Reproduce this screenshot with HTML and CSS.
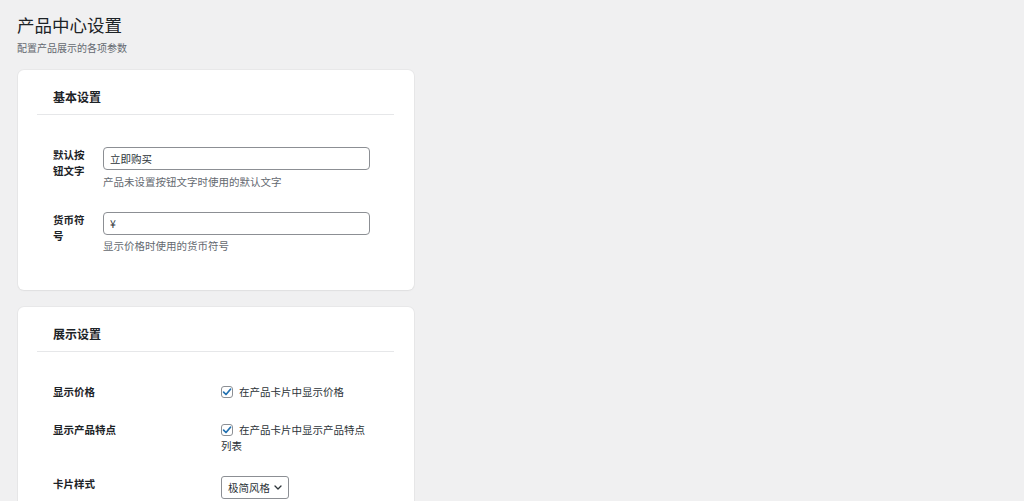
FILE: index.html
```html
<!DOCTYPE html>
<html lang="zh-CN">
<head>
<meta charset="utf-8">
<title>产品中心设置</title>
<link rel="stylesheet" href="styles.css">
</head>
<body>
<div class="page">
  <h1 class="page-title">产品中心设置</h1>
  <p class="page-sub">配置产品展示的各项参数</p>

  <section class="card">
    <div class="card-head"><h2 class="card-title">基本设置</h2></div>
    <div class="card-body grid-basic">
      <div class="label">默认按钮文字</div>
      <div class="field">
        <input class="text-input" type="text" value="立即购买">
        <p class="desc">产品未设置按钮文字时使用的默认文字</p>
      </div>
      <div class="label">货币符号</div>
      <div class="field">
        <input class="text-input" type="text" value="¥">
        <p class="desc">显示价格时使用的货币符号</p>
      </div>
    </div>
  </section>

  <section class="card">
    <div class="card-head"><h2 class="card-title">展示设置</h2></div>
    <div class="card-body grid-display">
      <div class="label">显示价格</div>
      <div class="field check-field">
        <span class="cb"><svg viewBox="0 0 12 12" width="12" height="12"><path d="M2.6 6.1 L5 8.5 L9.5 3.2" fill="none" stroke="#2271b1" stroke-width="1.7" stroke-linecap="round" stroke-linejoin="round"/></svg></span>在产品卡片中显示价格
      </div>
      <div class="label">显示产品特点</div>
      <div class="field check-field">
        <span class="cb"><svg viewBox="0 0 12 12" width="12" height="12"><path d="M2.6 6.1 L5 8.5 L9.5 3.2" fill="none" stroke="#2271b1" stroke-width="1.7" stroke-linecap="round" stroke-linejoin="round"/></svg></span>在产品卡片中显示产品特点列表
      </div>
      <div class="label">卡片样式</div>
      <div class="field">
        <div class="select"><span>极简风格</span><svg viewBox="0 0 8 5" width="8" height="5"><path d="M1 1 L4 4 L7 1" fill="none" stroke="#2c3338" stroke-width="1.3" stroke-linecap="round" stroke-linejoin="round"/></svg></div>
      </div>
    </div>
  </section>
</div>
</body>
</html>
```
FILE: styles.css
```css
html, body {
  margin: 0;
  padding: 0;
}
body {
  background: #f0f0f1;
  color: #1d2327;
  font-family: "Noto Sans CJK SC", "Noto Sans", sans-serif;
  font-size: 10.5px;
}
.page {
  padding: 13px 0 0 17px;
}
.page-title {
  margin: 0;
  font-size: 17.5px;
  line-height: 24px;
  font-weight: 400;
  color: #1d2327;
}
.page-sub {
  margin: 3px 0 0;
  font-size: 10px;
  line-height: 16px;
  color: #646970;
}
.card {
  width: 396px;
  box-sizing: border-box;
  margin: 14px 0 17px 1px;
  padding: 0 20px 0 19px;
  background: #fff;
  border-radius: 6px;
  box-shadow: 0 0 0 1px rgba(0,0,0,0.03), 0 1px 2px rgba(0,0,0,0.04);
}
.card + .card {
  margin-top: 0;
}
.card-head {
  padding: 19px 16px 9px;
  border-bottom: 1px solid #e6e7e9;
}
.card-title {
  margin: 0;
  font-size: 12px;
  line-height: 16px;
  font-weight: 700;
  color: #1d2327;
}
.card-body {
  display: grid;
  row-gap: 22px;
  padding: 32px 16px 36px;
  align-items: start;
}
.grid-basic {
  grid-template-columns: 36px 267px;
  column-gap: 14px;
}
.grid-display {
  grid-template-columns: 152px 150px;
  column-gap: 16px;
}
.label {
  font-weight: 700;
  line-height: 16px;
  color: #1d2327;
}
.field {
  line-height: 16px;
}
.text-input {
  display: block;
  box-sizing: border-box;
  width: 267px;
  height: 23px;
  margin: 0;
  padding: 0 6px;
  border: 1px solid #8c8f94;
  border-radius: 4px;
  font-family: inherit;
  font-size: 10.5px;
  color: #2c3338;
  background: #fff;
}
.desc {
  margin: 3.5px 0 0;
  font-size: 10.5px;
  line-height: 16px;
  color: #646970;
}
.check-field {
  color: #2c3338;
}
.cb {
  display: inline-block;
  box-sizing: border-box;
  width: 12px;
  height: 12px;
  margin: 0 6px 0 0;
  vertical-align: -2px;
  border: 1px solid #8c8f94;
  border-radius: 3px;
  background: #fff;
  position: relative;
}
.cb svg {
  position: absolute;
  left: -1px;
  top: -1px;
}
.select {
  display: inline-flex;
  align-items: center;
  box-sizing: border-box;
  height: 23px;
  padding: 0 6px 0 6px;
  border: 1px solid #8c8f94;
  border-radius: 3px;
  background: #fff;
  color: #2c3338;
  gap: 4px;
}
.select svg {
  display: block;
}
```
